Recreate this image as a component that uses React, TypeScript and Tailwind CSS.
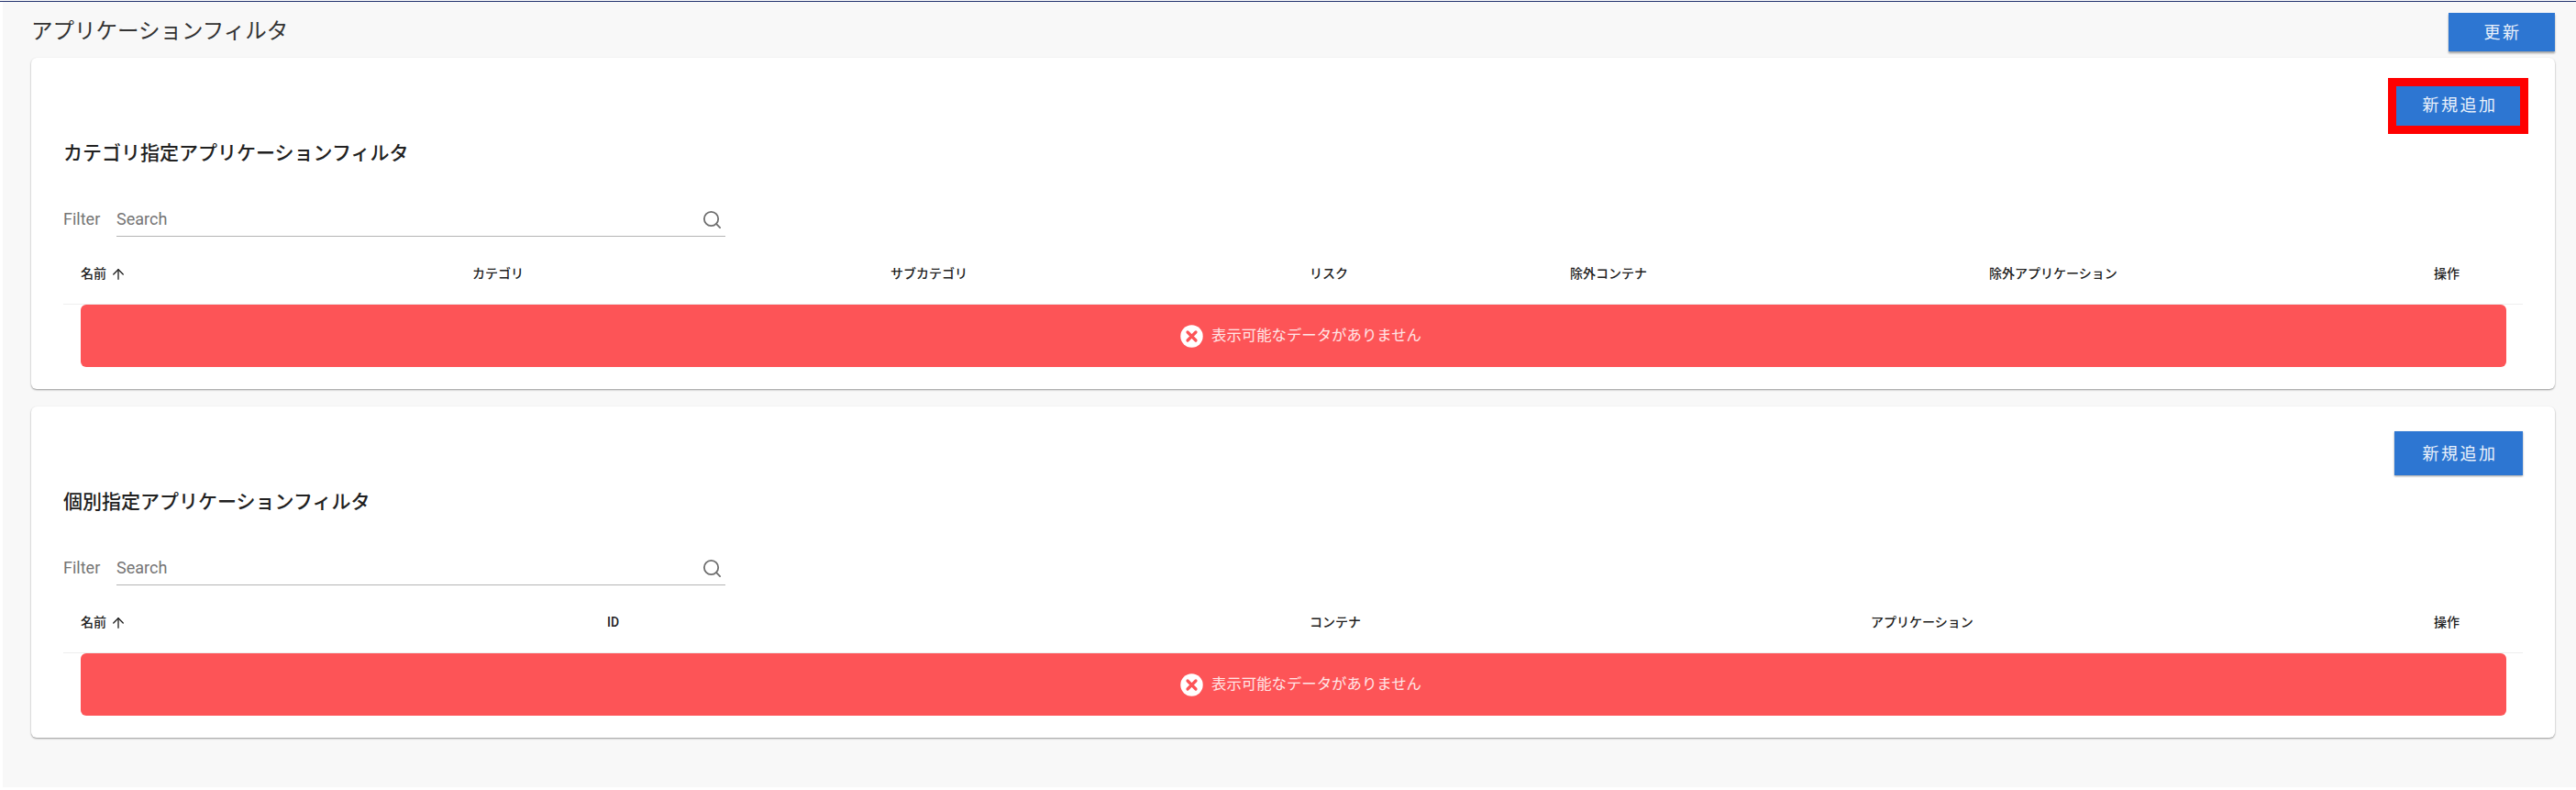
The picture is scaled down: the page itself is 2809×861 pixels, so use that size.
import { ArrowUp, Search } from "lucide-react";

const FONT = "font-['Roboto','Noto_Sans_CJK_JP',sans-serif]";

interface FilterCardProps {
  title: string;
  gridCols: string;
  columns: string[];
  highlighted?: boolean;
}

function EmptyIcon() {
  return (
    <svg width="25" height="25" viewBox="0 0 25 25" className="shrink-0">
      <circle cx="12.5" cy="12.5" r="12.2" fill="#ffffff" />
      <path d="M8 8l9 9M17 8l-9 9" stroke="#fd5457" strokeWidth="3.2" strokeLinecap="round" />
    </svg>
  );
}

function FilterCard({ title, gridCols, columns, highlighted }: FilterCardProps) {
  return (
    <section className="relative h-[361px] rounded-[6px] bg-white pl-[35px] pr-[35px] pt-[27px] shadow-[0_1px_2px_rgba(0,0,0,0.4)]">
      <div className="flex justify-end">
        <button className="h-[48px] w-[140px] bg-[#2d76d2] pl-[3px] text-[18px] tracking-[2.5px] text-white/90 shadow-[0_1px_2px_rgba(0,0,0,0.4)]">
          新規追加
        </button>
      </div>

      {/* red annotation drawn over the screenshot */}
      {highlighted && (
        <div className="absolute left-[2570px] top-[22px] h-[61px] w-[153px] border-[9px] border-[#ff0000]" />
      )}

      <h2 className="mt-[14px] h-[30px] text-[21px] font-medium leading-[30px] text-[#212121]">{title}</h2>

      <div className="mt-[46px] flex h-[30px] items-start">
        <span className="w-[58px] text-[18px] leading-[22px] text-[#757575]">Filter</span>
        <div className="flex h-[30px] w-[664px] items-start justify-between border-b border-[#b4b4b4] pr-[3px]">
          <span className="text-[18px] leading-[22px] text-[#757575]">Search</span>
          <Search size={23} strokeWidth={1.9} className="text-[#6f6f6f]" />
        </div>
      </div>

      <div className={`grid h-[74px] border-b border-[#eeeeee] pl-[19px] pt-[26px] ${gridCols}`}>
        {columns.map((col, i) => (
          <div key={col} className="flex h-[28px] items-center text-[14px] font-medium text-[#212121]">
            {col}
            {i === 0 && <ArrowUp size={18} strokeWidth={1.8} className="ml-[4px] mt-[2px]" />}
          </div>
        ))}
      </div>

      <div className="ml-[19px] mr-[18px] flex h-[68px] items-center justify-center gap-[9px] rounded-[6px] bg-[#fd5457] pl-[16px] text-[16.4px] text-white/85">
        <EmptyIcon />
        <span>表示可能なデータがありません</span>
      </div>
    </section>
  );
}

export default function App() {
  return (
    <div className={`h-[861px] w-[2809px] overflow-hidden bg-white pt-[1px] ${FONT}`}>
      <div className="h-[1px] bg-[#1f2f6b]" />
      <main className="ml-[3px] h-[856px] bg-[#f8f8f8] pl-[31px] pr-[23px] pt-[12px]">
        <header className="flex h-[42px] items-center justify-between">
          <h1 className="text-[23.5px] font-normal text-[#333333]">アプリケーションフィルタ</h1>
          <button className="h-[42px] w-[116px] bg-[#2d76d2] pl-[2px] text-[18px] tracking-[2.5px] text-white/90 shadow-[0_2px_2px_rgba(0,0,0,0.35)]">
            更新
          </button>
        </header>

        <div className="mt-[7px] flex flex-col gap-[19px]">
          <FilterCard
            highlighted
            title="カテゴリ指定アプリケーションフィルタ"
            gridCols="grid-cols-[427px_456px_457px_284px_457px_485px_1fr]"
            columns={["名前", "カテゴリ", "サブカテゴリ", "リスク", "除外コンテナ", "除外アプリケーション", "操作"]}
          />
          <FilterCard
            title="個別指定アプリケーションフィルタ"
            gridCols="grid-cols-[574px_766px_612px_614px_1fr]"
            columns={["名前", "ID", "コンテナ", "アプリケーション", "操作"]}
          />
        </div>
      </main>
    </div>
  );
}
